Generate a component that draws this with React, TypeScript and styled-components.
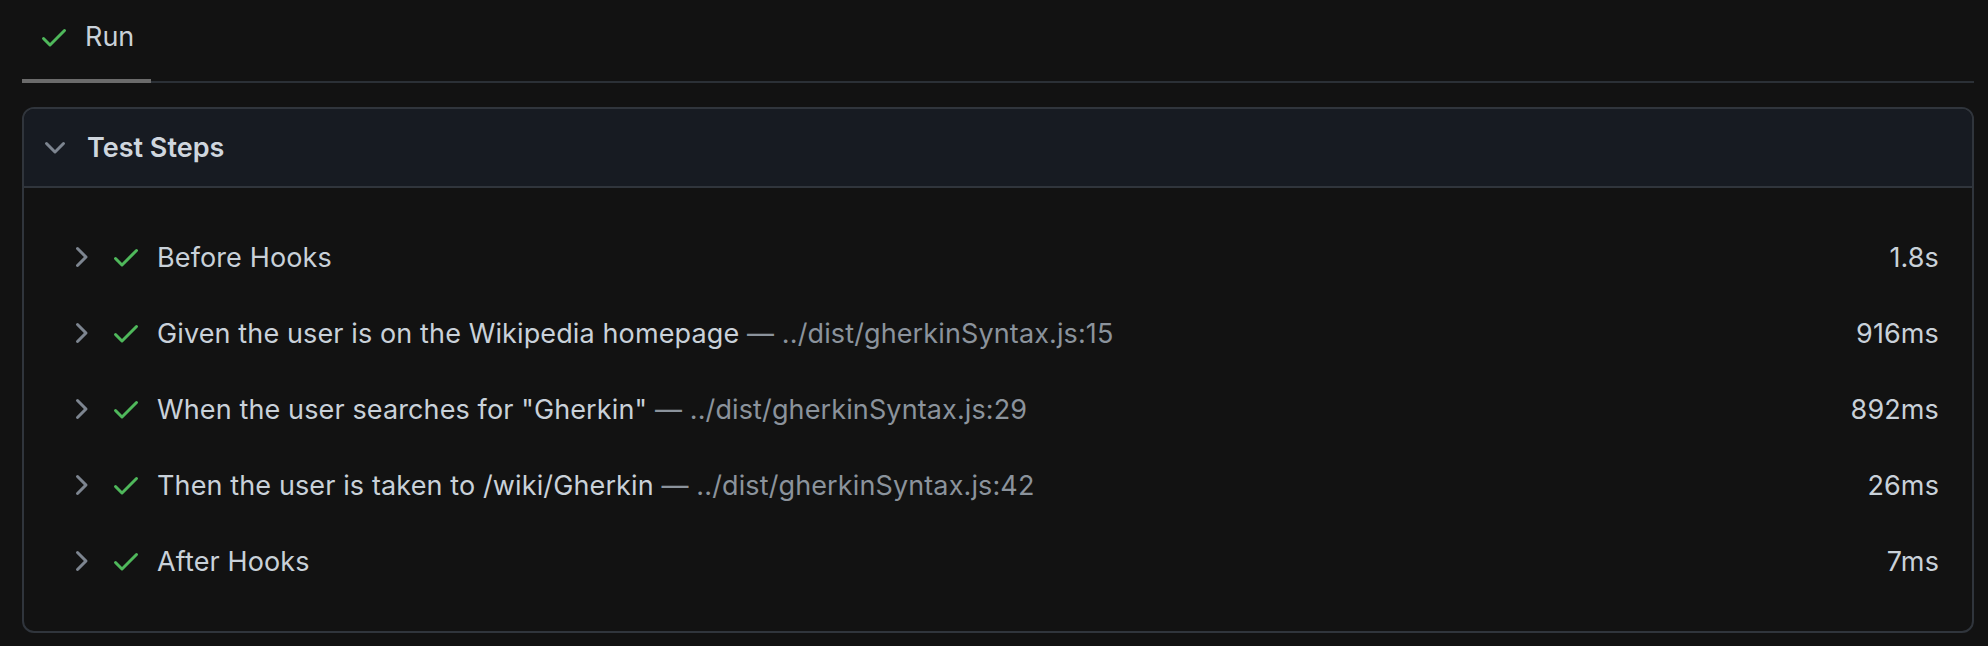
import styled, { createGlobalStyle } from "styled-components";

const GlobalStyle = createGlobalStyle`
  html, body {
    margin: 0;
    background: #121212;
  }
  body {
    font-family: Inter, "Noto Sans", sans-serif;
    color: #c9d1d9;
  }
`;

const Page = styled.div`
  padding: 0 14px 0 22px;
`;

const TabBar = styled.div`
  display: flex;
  height: 83px;
  border-bottom: 2px solid #2b3036;
  box-sizing: border-box;
`;

const Tab = styled.div<{ $active?: boolean }>`
  display: flex;
  align-items: center;
  gap: 15px;
  padding: 0 17px 6px 16px;
  margin-bottom: -2px;
  border-bottom: 4px solid ${(p) => (p.$active ? "#6b6b6b" : "transparent")};
  font-size: 27px;
  color: #c9d1d9;
`;

const TabIcon = styled.span`
  display: flex;
  width: 32px;
  color: #4fb85b;
`;

const Panel = styled.section`
  margin-top: 24px;
  border: 2px solid #30353c;
  border-radius: 12px;
  overflow: hidden;
  height: 526px;
  box-sizing: border-box;
`;

const PanelHeader = styled.div`
  display: flex;
  align-items: center;
  gap: 16px;
  height: 79px;
  padding: 0 16px 0 15px;
  box-sizing: border-box;
  background: #171b22;
  border-bottom: 2px solid #30353c;
  font-size: 27px;
  font-weight: 600;
  color: #cfd6de;
`;

const StepList = styled.div`
  display: flex;
  flex-direction: column;
  padding: 31px 33px 0 40px;
`;

const StepRow = styled.div`
  display: flex;
  align-items: center;
  height: 76px;
  font-size: 27px;
  letter-spacing: 0.12px;
`;

const Chevron = styled.span`
  display: flex;
  width: 32px;
  margin-right: 14px;
  color: #7d8590;
`;

const Check = styled.span`
  display: flex;
  width: 32px;
  margin-right: 15px;
  color: #4fb85b;
`;

const StepName = styled.span`
  flex: 1;
  color: #c9d1d9;
  white-space: nowrap;
`;

const Location = styled.span`
  color: #8b939c;
`;

const Duration = styled.span`
  color: #c9d1d9;
`;

const CheckIcon = () => (
  <svg width="32" height="32" viewBox="0 0 16 16" fill="currentColor">
    <path d="M13.78 4.22a.75.75 0 0 1 0 1.06l-7.25 7.25a.75.75 0 0 1-1.06 0L2.22 9.28a.751.751 0 0 1 .018-1.042.751.751 0 0 1 1.042-.018L6 10.94l6.72-6.72a.75.75 0 0 1 1.06 0Z" />
  </svg>
);

const ChevronRight = () => (
  <svg width="32" height="32" viewBox="0 0 16 16" fill="currentColor">
    <path d="M6.22 3.22a.75.75 0 0 1 1.06 0l4.25 4.25a.75.75 0 0 1 0 1.06l-4.25 4.25a.751.751 0 0 1-1.042-.018.751.751 0 0 1-.018-1.042L9.94 8 6.22 4.28a.75.75 0 0 1 0-1.06Z" />
  </svg>
);

const ChevronDown = () => (
  <svg width="32" height="32" viewBox="0 0 16 16" fill="#7d8590">
    <path d="M12.78 5.22a.749.749 0 0 1 0 1.06l-4.25 4.25a.749.749 0 0 1-1.06 0L3.22 6.28a.749.749 0 1 1 1.06-1.06L8 8.94l3.72-3.72a.749.749 0 0 1 1.06 0Z" />
  </svg>
);

const steps = [
  { name: "Before Hooks", duration: "1.8s" },
  {
    name: "Given the user is on the Wikipedia homepage",
    location: "../dist/gherkinSyntax.js:15",
    duration: "916ms",
  },
  {
    name: 'When the user searches for "Gherkin"',
    location: "../dist/gherkinSyntax.js:29",
    duration: "892ms",
  },
  {
    name: "Then the user is taken to /wiki/Gherkin",
    location: "../dist/gherkinSyntax.js:42",
    duration: "26ms",
  },
  { name: "After Hooks", duration: "7ms" },
];

export default function App() {
  return (
    <Page>
      <GlobalStyle />
      <TabBar>
        <Tab $active>
          <TabIcon>
            <CheckIcon />
          </TabIcon>
          Run
        </Tab>
      </TabBar>
      <Panel>
        <PanelHeader>
          <ChevronDown />
          Test Steps
        </PanelHeader>
        <StepList>
          {steps.map((s) => (
            <StepRow key={s.name}>
              <Chevron>
                <ChevronRight />
              </Chevron>
              <Check>
                <CheckIcon />
              </Check>
              <StepName>
                {s.name}
                {s.location ? <Location> — {s.location}</Location> : null}
              </StepName>
              <Duration>{s.duration}</Duration>
            </StepRow>
          ))}
        </StepList>
      </Panel>
    </Page>
  );
}
